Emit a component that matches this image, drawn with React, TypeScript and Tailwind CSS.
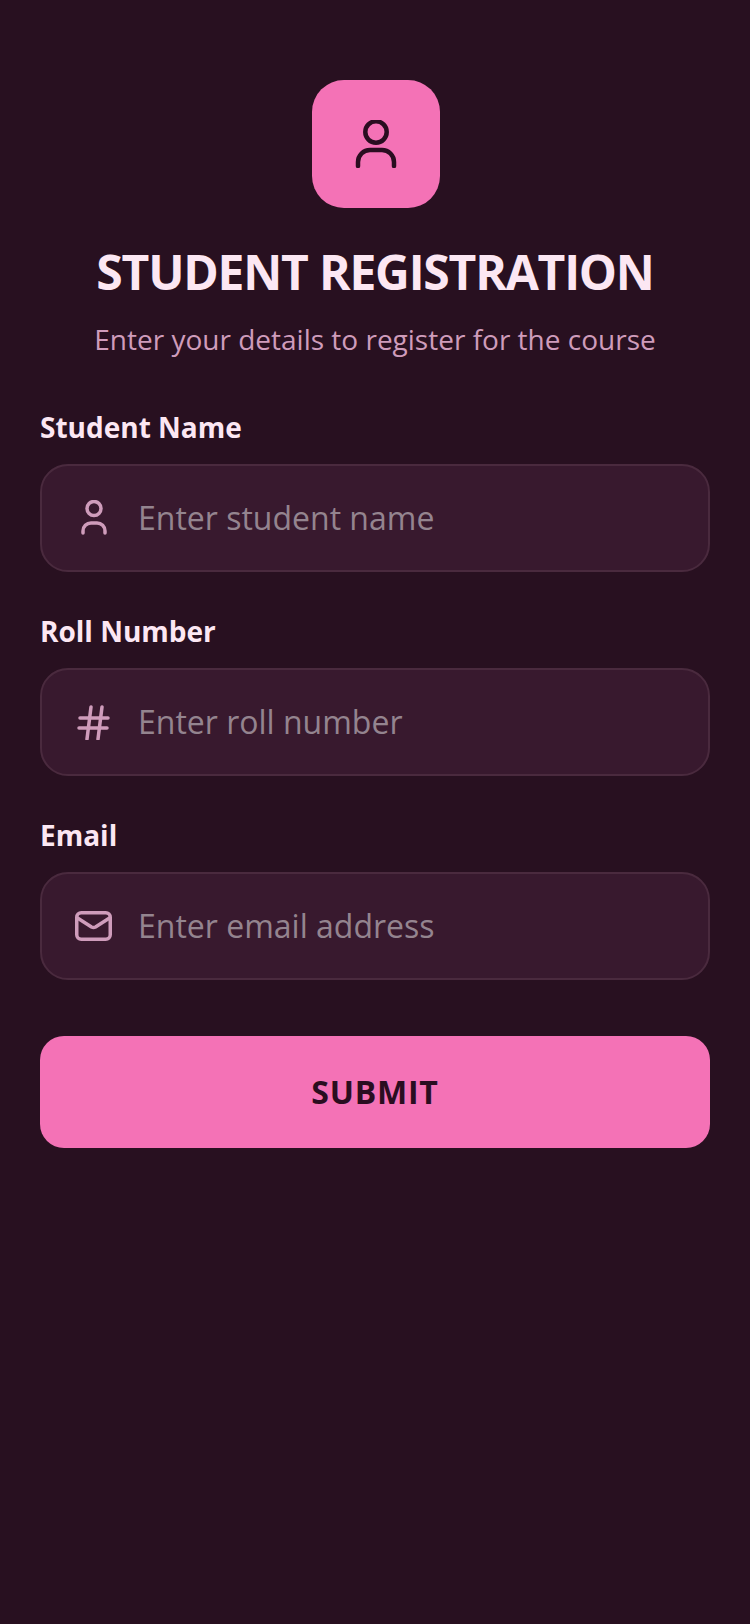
const font = { fontFamily: '"Open Sans", sans-serif' };

function UserLarge() {
  return (
    <svg width="48" height="48" viewBox="0 0 48 48" fill="none" stroke="#2a0d20" strokeWidth="4.5" strokeLinecap="round">
      <circle cx="24" cy="12" r="10.7" />
      <path d="M6 46v-4a12 12 0 0 1 12-12h12a12 12 0 0 1 12 12v4" />
    </svg>
  );
}

function UserSmall() {
  return (
    <svg width="36" height="36" viewBox="0 0 36 36" fill="none" stroke="#cf9cbb" strokeWidth="3.5" strokeLinecap="round">
      <circle cx="19" cy="8.5" r="7" />
      <path d="M8 33v-2a8 8 0 0 1 8-8h6a8 8 0 0 1 8 8v2" />
    </svg>
  );
}

function HashIcon() {
  return (
    <svg width="36" height="36" viewBox="0 0 36 36" fill="none" stroke="#cf9cbb" strokeWidth="3.5" strokeLinecap="round">
      <path d="M5 14h28M4 24h28M16 3l-4 32M27 3l-4 32" />
    </svg>
  );
}

function MailIcon() {
  return (
    <svg width="37" height="30" viewBox="0 0 37 30" fill="none" stroke="#cf9cbb" strokeWidth="3.5" strokeLinecap="round" strokeLinejoin="round">
      <rect x="1.75" y="1.75" width="33.5" height="26.5" rx="4.5" />
      <path d="M2.5 7l14 9a4 4 0 0 0 4 0l14-9" />
    </svg>
  );
}

function Field({ label, placeholder, icon }: { label: string; placeholder: string; icon: React.ReactNode }) {
  return (
    <div className="flex flex-col">
      <label className="text-[28px] leading-[36px] font-bold text-[#fce7f3]">{label}</label>
      <div className="mt-[19px] flex h-[108px] items-center rounded-[28px] border-2 border-[#4a2a3e] bg-[#38192e]">
        <span className="flex w-[96px] shrink-0 justify-center pl-[6px]">{icon}</span>
        <input
          readOnly
          placeholder={placeholder}
          className="min-w-0 flex-1 bg-transparent text-[32px] text-white outline-none placeholder:text-[#94848f]"
          style={font}
        />
      </div>
    </div>
  );
}

export default function App() {
  return (
    <div className="flex min-h-[1624px] flex-col bg-[#281020] px-[40px] pt-[80px]" style={font}>
      <div className="flex flex-col items-center">
        <div className="ml-[2px] flex h-[128px] w-[128px] items-center justify-center rounded-[32px] bg-[#f472b6]">
          <UserLarge />
        </div>
        <h1 className="mt-[32px] text-[48px] leading-[64px] font-bold tracking-[-1.2px] text-[#fce7f3]">STUDENT REGISTRATION</h1>
        <p className="mt-[15px] text-[28px] leading-[40px] text-[#cf9cbb]">Enter your details to register for the course</p>
      </div>
      <div className="mt-[50px] flex flex-col gap-[41px]">
        <Field label="Student Name" placeholder="Enter student name" icon={<UserSmall />} />
        <Field label="Roll Number" placeholder="Enter roll number" icon={<HashIcon />} />
        <Field label="Email" placeholder="Enter email address" icon={<MailIcon />} />
      </div>
      <button className="mt-[56px] h-[112px] w-full rounded-[24px] bg-[#f472b6] text-[32px] font-bold tracking-[0.8px] text-[#2a0d20]">
        SUBMIT
      </button>
    </div>
  );
}
